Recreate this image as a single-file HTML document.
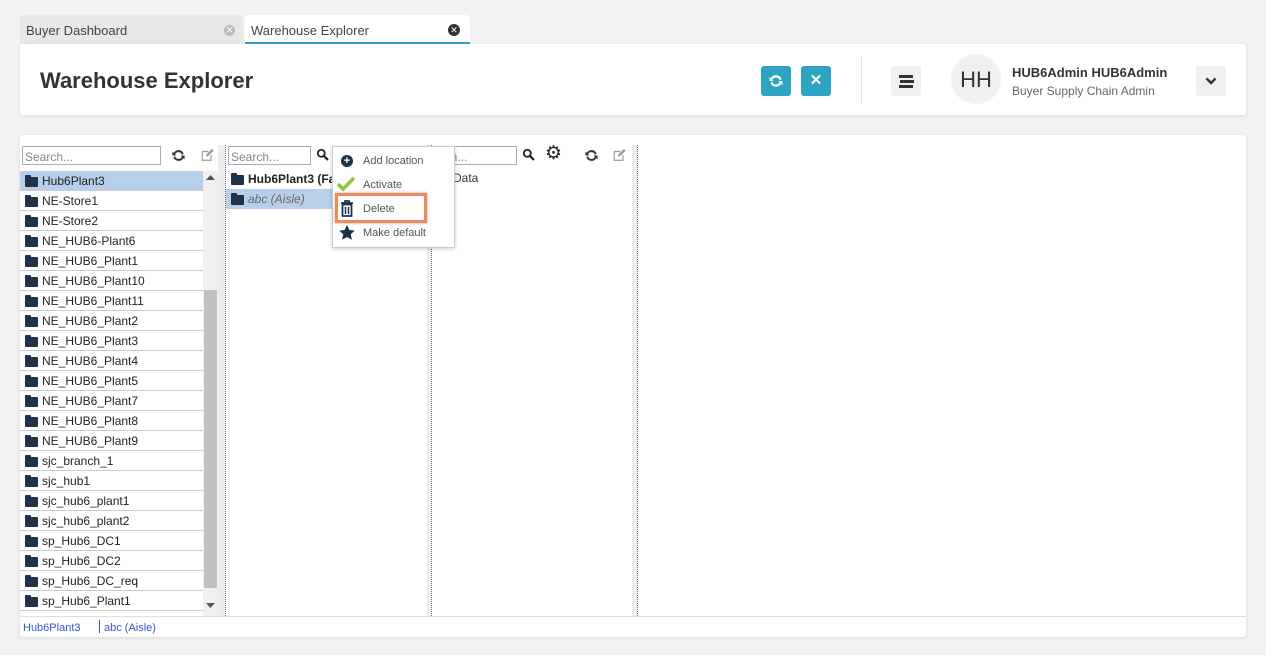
<!DOCTYPE html>
<html><head><meta charset="utf-8"><style>
*{box-sizing:border-box;margin:0;padding:0}
body{width:1266px;height:655px;background:#f2f2f2;font-family:"Liberation Sans",sans-serif;position:relative;overflow:hidden;color:#333}
.abs{position:absolute}
svg{position:absolute}
.tab{position:absolute;top:15px;height:29px;border-radius:4px 4px 0 0;font-size:13px;line-height:31px;padding-left:6px;color:#444}
.card{position:absolute;background:#fff;border-radius:3px;box-shadow:0 1px 4px rgba(0,0,0,.1)}
.row{position:absolute;left:20px;width:183px;height:20px;border-bottom:1px solid #ccc;font-size:12px;line-height:21px;padding-left:22px;color:#222}
.fold{position:absolute;left:5px;top:6px;width:13px;height:10px;background:#1e3347;border-radius:1px}
.fold:before{content:"";position:absolute;left:0;top:-2px;width:6px;height:3px;background:#1e3347;border-radius:1px 1px 0 0}
.search{position:absolute;height:19px;border:1px solid #aab;font-size:12px;color:#888;padding-left:2px;line-height:20px;background:#fff}
.split{position:absolute;top:145px;height:471px;background:#ededed;border-right:1px dotted #777}
.mi{position:absolute;left:363px;font-size:11px;color:#555}
</style></head><body>
<svg width="0" height="0"><defs>
<symbol id="ref" viewBox="0 0 16 16"><path d="M13.5 6.5A5.7 5.7 0 0 0 3 5.2L1.5 3.8V8h4.2L4.4 6.7A3.9 3.9 0 0 1 11.6 7zM2.5 9.5A5.7 5.7 0 0 0 13 10.8l1.5 1.4V8h-4.2l1.3 1.3A3.9 3.9 0 0 1 4.4 9z" fill="currentColor"/></symbol>
<symbol id="mag" viewBox="0 0 16 16"><circle cx="6.5" cy="6.5" r="4.3" fill="none" stroke="currentColor" stroke-width="2.2"/><path d="M9.5 9.5l4.5 4.5" stroke="currentColor" stroke-width="2.8" stroke-linecap="round"/></symbol>
<symbol id="ed" viewBox="0 0 16 16"><path d="M2 4h7M2 4v10h10V8" fill="none" stroke="currentColor" stroke-width="1.3"/><path d="M6 10l1-3 6-6 2 2-6 6z" fill="currentColor"/></symbol>
</defs></svg>
<div class="tab" style="left:20px;width:223px;background:#e8e8e8">Buyer Dashboard<span class="abs" style="right:8px;top:10px;width:11px;height:11px;border-radius:50%;background:#bbb;color:#fff;font-size:9px;line-height:11px;text-align:center">✕</span></div>
<div class="tab" style="left:245px;width:225px;background:#fff;border-bottom:2px solid #2fa4c0">Warehouse Explorer<span class="abs" style="right:10px;top:9px;width:12px;height:12px;border-radius:50%;background:#333;color:#fff;font-size:9px;line-height:12px;text-align:center">✕</span></div>
<div class="card" style="left:20px;top:44px;width:1226px;height:71px">
<div class="abs" style="left:20px;top:24px;font-size:22px;font-weight:bold;color:#333">Warehouse Explorer</div>
<div class="abs" style="left:741px;top:22px;width:30px;height:30px;background:#2fa4c0;border-radius:3px;color:#fff"><svg style="left:7px;top:7px" width="16" height="16"><use href="#ref"/></svg></div>
<div class="abs" style="left:781px;top:22px;width:30px;height:30px;background:#2fa4c0;border-radius:3px;color:#fff;font-size:15px;text-align:center;line-height:30px;font-weight:bold">✕</div>
<div class="abs" style="left:841px;top:12px;width:1px;height:48px;background:#e5e5e5"></div>
<div class="abs" style="left:871px;top:22px;width:30px;height:30px;background:#f0f0f0;border-radius:3px"><div class="abs" style="left:8px;top:9px;width:14px;height:3px;background:#333;box-shadow:1px 5px 0 #333,0 10px 0 #333"></div></div>
<div class="abs" style="left:931px;top:10px;width:50px;height:50px;background:#f0f0f0;border-radius:50%;font-size:22px;line-height:52px;text-align:center;color:#333">HH</div>
<div class="abs" style="left:992px;top:21px;font-size:13px;font-weight:bold;color:#333">HUB6Admin HUB6Admin</div>
<div class="abs" style="left:992px;top:40px;font-size:12px;color:#666">Buyer Supply Chain Admin</div>
<div class="abs" style="left:1176px;top:22px;width:30px;height:30px;background:#f0f0f0;border-radius:3px"><svg style="left:9px;top:10px" width="12" height="10"><path d="M1.5 2.5L6 7l4.5-4.5" fill="none" stroke="#333" stroke-width="2.4"/></svg></div>
</div>
<div class="card" style="left:20px;top:135px;width:1226px;height:502px"></div>
<div class="search" style="left:22px;top:146px;width:139px">Search...</div>
<svg style="left:171px;top:148px;color:#333" width="15" height="15"><use href="#ref"/></svg>
<svg style="left:200px;top:148px;color:#999" width="15" height="14"><use href="#ed"/></svg>
<div class="abs" style="left:20px;top:171px;width:183px;height:20px;background:#b8cfe9"></div>
<div class="row" style="top:171px"><i class="fold"></i>Hub6Plant3</div>
<div class="row" style="top:191px"><i class="fold"></i>NE-Store1</div>
<div class="row" style="top:211px"><i class="fold"></i>NE-Store2</div>
<div class="row" style="top:231px"><i class="fold"></i>NE_HUB6-Plant6</div>
<div class="row" style="top:251px"><i class="fold"></i>NE_HUB6_Plant1</div>
<div class="row" style="top:271px"><i class="fold"></i>NE_HUB6_Plant10</div>
<div class="row" style="top:291px"><i class="fold"></i>NE_HUB6_Plant11</div>
<div class="row" style="top:311px"><i class="fold"></i>NE_HUB6_Plant2</div>
<div class="row" style="top:331px"><i class="fold"></i>NE_HUB6_Plant3</div>
<div class="row" style="top:351px"><i class="fold"></i>NE_HUB6_Plant4</div>
<div class="row" style="top:371px"><i class="fold"></i>NE_HUB6_Plant5</div>
<div class="row" style="top:391px"><i class="fold"></i>NE_HUB6_Plant7</div>
<div class="row" style="top:411px"><i class="fold"></i>NE_HUB6_Plant8</div>
<div class="row" style="top:431px"><i class="fold"></i>NE_HUB6_Plant9</div>
<div class="row" style="top:451px"><i class="fold"></i>sjc_branch_1</div>
<div class="row" style="top:471px"><i class="fold"></i>sjc_hub1</div>
<div class="row" style="top:491px"><i class="fold"></i>sjc_hub6_plant1</div>
<div class="row" style="top:511px"><i class="fold"></i>sjc_hub6_plant2</div>
<div class="row" style="top:531px"><i class="fold"></i>sp_Hub6_DC1</div>
<div class="row" style="top:551px"><i class="fold"></i>sp_Hub6_DC2</div>
<div class="row" style="top:571px"><i class="fold"></i>sp_Hub6_DC_req</div>
<div class="row" style="top:591px"><i class="fold"></i>sp_Hub6_Plant1</div>
<div class="abs" style="left:203px;top:171px;width:15px;height:445px;background:#f0f0f0"></div>
<div class="abs" style="left:204px;top:290px;width:13px;height:298px;background:#c1c1c1"></div>
<svg style="left:206px;top:175px" width="9" height="6"><path d="M0 5L4.5 0 9 5z" fill="#555"/></svg>
<svg style="left:206px;top:603px" width="9" height="6"><path d="M0 0L4.5 5 9 0z" fill="#555"/></svg>
<div class="split" style="left:218px;width:8px"></div>
<div class="split" style="left:427px;width:5px"></div>
<div class="split" style="left:633px;width:5px"></div>
<div class="search" style="left:228px;top:146px;width:83px">Search...</div>
<svg style="left:316px;top:148px;color:#222" width="13" height="13"><use href="#mag"/></svg>
<div class="abs" style="left:226px;top:171px;width:201px;font-size:12px;font-weight:bold;line-height:16px;padding-left:22px;color:#222"><i class="fold" style="top:4px"></i>Hub6Plant3 (Fa</div>
<div class="abs" style="left:226px;top:189px;width:201px;height:20px;background:#b8cfe9;font-size:12px;font-style:italic;line-height:21px;padding-left:22px;color:#666"><i class="fold"></i>abc (Aisle)</div>
<div class="search" style="left:432px;top:146px;width:85px;border-left:none">arch...</div>
<svg style="left:522px;top:148px;color:#222" width="13" height="13"><use href="#mag"/></svg>
<div class="abs" style="left:545px;top:142px;font-size:19px;color:#222">⚙</div>
<svg style="left:584px;top:148px;color:#333" width="15" height="15"><use href="#ref"/></svg>
<svg style="left:612px;top:148px;color:#999" width="15" height="14"><use href="#ed"/></svg>
<div class="abs" style="left:453px;top:171px;font-size:12px;color:#333">Data</div>
<div class="abs" style="left:332px;top:146px;width:123px;height:102px;background:#fff;border:1px solid #ccc;box-shadow:0 1px 4px rgba(0,0,0,.2)"></div>
<div class="abs" style="left:341px;top:155px;width:12px;height:12px;border-radius:50%;background:#1e3347;color:#fff;font-size:11px;line-height:12px;text-align:center;font-weight:bold">+</div>
<div class="mi" style="top:155px">Add location</div>
<svg style="left:337px;top:177px" width="18" height="14"><path d="M1 7l5 5L17 1" fill="none" stroke="#8cc63f" stroke-width="3.5"/></svg>
<div class="mi" style="top:179px">Activate</div>
<div class="abs" style="left:335px;top:193px;width:92px;height:30px;border:3px solid #f08a5d;box-shadow:0 0 3px rgba(0,0,0,.3)"></div>
<svg style="left:340px;top:200px" width="14" height="17"><path d="M1 3h12M5 3V1h4v2M2.5 4.5h9V16h-9z" fill="none" stroke="#1e3347" stroke-width="1.8"/><path d="M5.5 7v7M8.5 7v7" stroke="#1e3347" stroke-width="1.5"/></svg>
<div class="mi" style="top:203px">Delete</div>
<svg style="left:339px;top:225px" width="16" height="15"><path d="M8 0l2.4 5 5.4.6-4 3.7 1.1 5.4L8 12l-4.9 2.7 1.1-5.4-4-3.7L5.6 5z" fill="#1e3347"/></svg>
<div class="mi" style="top:227px">Make default</div>
<div class="abs" style="left:20px;top:616px;width:1226px;height:1px;background:#ddd"></div>
<div class="abs" style="left:23px;top:622px;font-size:11px;color:#3355cc">Hub6Plant3</div>
<div class="abs" style="left:99px;top:620px;width:1px;height:13px;background:#3355cc"></div>
<div class="abs" style="left:104px;top:622px;font-size:11px;color:#3355cc">abc (Aisle)</div>
</body></html>
